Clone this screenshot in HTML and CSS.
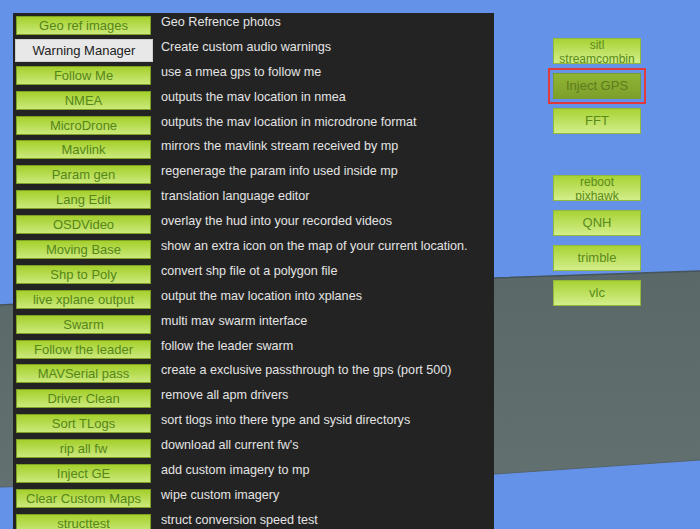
FILE: index.html
```html
<!DOCTYPE html>
<html lang="en">
<head>
  <meta charset="UTF-8">
  <title>Mission Planner - Tools</title>
  <link rel="stylesheet" href="styles.css">
</head>
<body>
  <!-- 3D view behind the tool buttons: sky and ground strip -->
  <svg class="scene" viewBox="0 0 700 529" preserveAspectRatio="none" aria-hidden="true">
    <defs>
      <linearGradient id="ground" x1="0" y1="0" x2="0" y2="1">
        <stop offset="0" stop-color="#5a6968"/>
        <stop offset="1" stop-color="#62716f"/>
      </linearGradient>
    </defs>
    <polygon points="0,305 495,278 700,271 700,460 495,474 0,487" fill="url(#ground)"/>
    <polyline points="0,305 495,278 700,271" fill="none" stroke="#45535a" stroke-width="1.5"/>
    <polyline points="0,487 495,474 700,460" fill="none" stroke="#55636a" stroke-width="1"/>
  </svg>

  <div class="screen">
    <div class="tools-panel">
      <div class="tool-row"><button class="tool-btn">Geo ref images</button><span class="tool-desc">Geo Refrence photos</span></div>
      <div class="tool-row"><button class="tool-btn focused">Warning Manager</button><span class="tool-desc">Create custom audio warnings</span></div>
      <div class="tool-row"><button class="tool-btn">Follow Me</button><span class="tool-desc">use a nmea gps to follow me</span></div>
      <div class="tool-row"><button class="tool-btn">NMEA</button><span class="tool-desc">outputs the mav location in nmea</span></div>
      <div class="tool-row"><button class="tool-btn">MicroDrone</button><span class="tool-desc">outputs the mav location in microdrone format</span></div>
      <div class="tool-row"><button class="tool-btn">Mavlink</button><span class="tool-desc">mirrors the mavlink stream received by mp</span></div>
      <div class="tool-row"><button class="tool-btn">Param gen</button><span class="tool-desc">regenerage the param info used inside mp</span></div>
      <div class="tool-row"><button class="tool-btn">Lang Edit</button><span class="tool-desc">translation language editor</span></div>
      <div class="tool-row"><button class="tool-btn">OSDVideo</button><span class="tool-desc">overlay the hud into your recorded videos</span></div>
      <div class="tool-row"><button class="tool-btn">Moving Base</button><span class="tool-desc">show an extra icon on the map of your current location.</span></div>
      <div class="tool-row"><button class="tool-btn">Shp to Poly</button><span class="tool-desc">convert shp file ot a polygon file</span></div>
      <div class="tool-row"><button class="tool-btn">live xplane output</button><span class="tool-desc">output the mav location into xplanes</span></div>
      <div class="tool-row"><button class="tool-btn">Swarm</button><span class="tool-desc">multi mav swarm interface</span></div>
      <div class="tool-row"><button class="tool-btn">Follow the leader</button><span class="tool-desc">follow the leader swarm</span></div>
      <div class="tool-row"><button class="tool-btn">MAVSerial pass</button><span class="tool-desc">create a exclusive passthrough to the gps (port 500)</span></div>
      <div class="tool-row"><button class="tool-btn">Driver Clean</button><span class="tool-desc">remove all apm drivers</span></div>
      <div class="tool-row"><button class="tool-btn">Sort TLogs</button><span class="tool-desc">sort tlogs into there type and sysid directorys</span></div>
      <div class="tool-row"><button class="tool-btn">rip all fw</button><span class="tool-desc">download all current fw's</span></div>
      <div class="tool-row"><button class="tool-btn">Inject GE</button><span class="tool-desc">add custom imagery to mp</span></div>
      <div class="tool-row"><button class="tool-btn">Clear Custom Maps</button><span class="tool-desc">wipe custom imagery</span></div>
      <div class="tool-row"><button class="tool-btn">structtest</button><span class="tool-desc">struct conversion speed test</span></div>
    </div>

    <div class="side-buttons">
      <div class="side-group">
        <button class="side-btn two-line">sitl<br>streamcombin</button>
        <button class="side-btn pressed">Inject GPS</button>
        <button class="side-btn">FFT</button>
      </div>
      <div class="side-group">
        <button class="side-btn two-line">reboot<br>pixhawk</button>
        <button class="side-btn">QNH</button>
        <button class="side-btn">trimble</button>
        <button class="side-btn">vlc</button>
      </div>
    </div>
  </div>
</body>
</html>
```

FILE: styles.css
```css
/* Base */
* {
  box-sizing: border-box;
}
html, body {
  margin: 0;
  height: 529px;
  overflow: hidden;
}
body {
  position: relative;
  background: #6592e9;
  font-family: 'Liberation Sans', Arial, sans-serif;
}

/* sky / ground backdrop */
.scene {
  position: absolute;
  left: 0;
  top: 0;
  width: 100%;
  height: 100%;
  z-index: 0;
}

.screen {
  position: relative;
  z-index: 1;
  display: flex;
  align-items: flex-start;
  padding: 13px 0 0 13px;
}

/* Tool list panel */
.tools-panel {
  width: 481px;
  height: 516px;
  overflow: hidden;
  background: #232323;
  padding: 3px 0 0 3px;
  display: grid;
  grid-auto-rows: 24.9px;
}
.tool-row {
  display: grid;
  grid-template-columns: 135px 1fr;
  column-gap: 10px;
  align-items: start;
}
.tool-btn {
  display: block;
  width: 135px;
  height: 19px;
  margin: 0;
  padding: 0;
  border: 1px solid #7f9f25;
  background: linear-gradient(#a4d02b, #cbe97b);
  color: #55861a;
  font-family: inherit;
  font-size: 13px;
  line-height: 17px;
  text-align: center;
  white-space: nowrap;
  cursor: pointer;
}
.tool-btn.focused {
  width: 138px;
  height: 23px;
  margin: -2px 0 0 -1px;
  border: 1px solid #cfcfcf;
  background: #e8e8e8;
  color: #222;
  line-height: 21px;
}
.tool-desc {
  color: #e4e4e4;
  font-size: 12.6px;
  line-height: 12px;
  white-space: nowrap;
}

/* Buttons floating over the 3D view */
.side-buttons {
  margin: 25px 0 0 59px;
  display: flex;
  flex-direction: column;
  gap: 41px;
}
.side-group {
  display: flex;
  flex-direction: column;
  gap: 9px;
}
.side-btn {
  width: 88px;
  height: 26px;
  margin: 0;
  padding: 0;
  border: 1px solid #93b83c;
  background: linear-gradient(#a8d335, #d3ee8a);
  color: #5a8a1c;
  font-family: inherit;
  font-size: 13px;
  line-height: 24px;
  text-align: center;
  overflow: hidden;
  cursor: pointer;
}
/* two-line captions are taller than the button and get clipped */
.side-btn.two-line {
  font-size: 12px;
  line-height: 13.5px;
}
.side-btn.pressed {
  border-color: #7d9a33;
  background: linear-gradient(#8fb534, #7e9f2b);
  color: #5d7b20;
  outline: 2px solid #e03a3a;
  outline-offset: 3px;
}
```
